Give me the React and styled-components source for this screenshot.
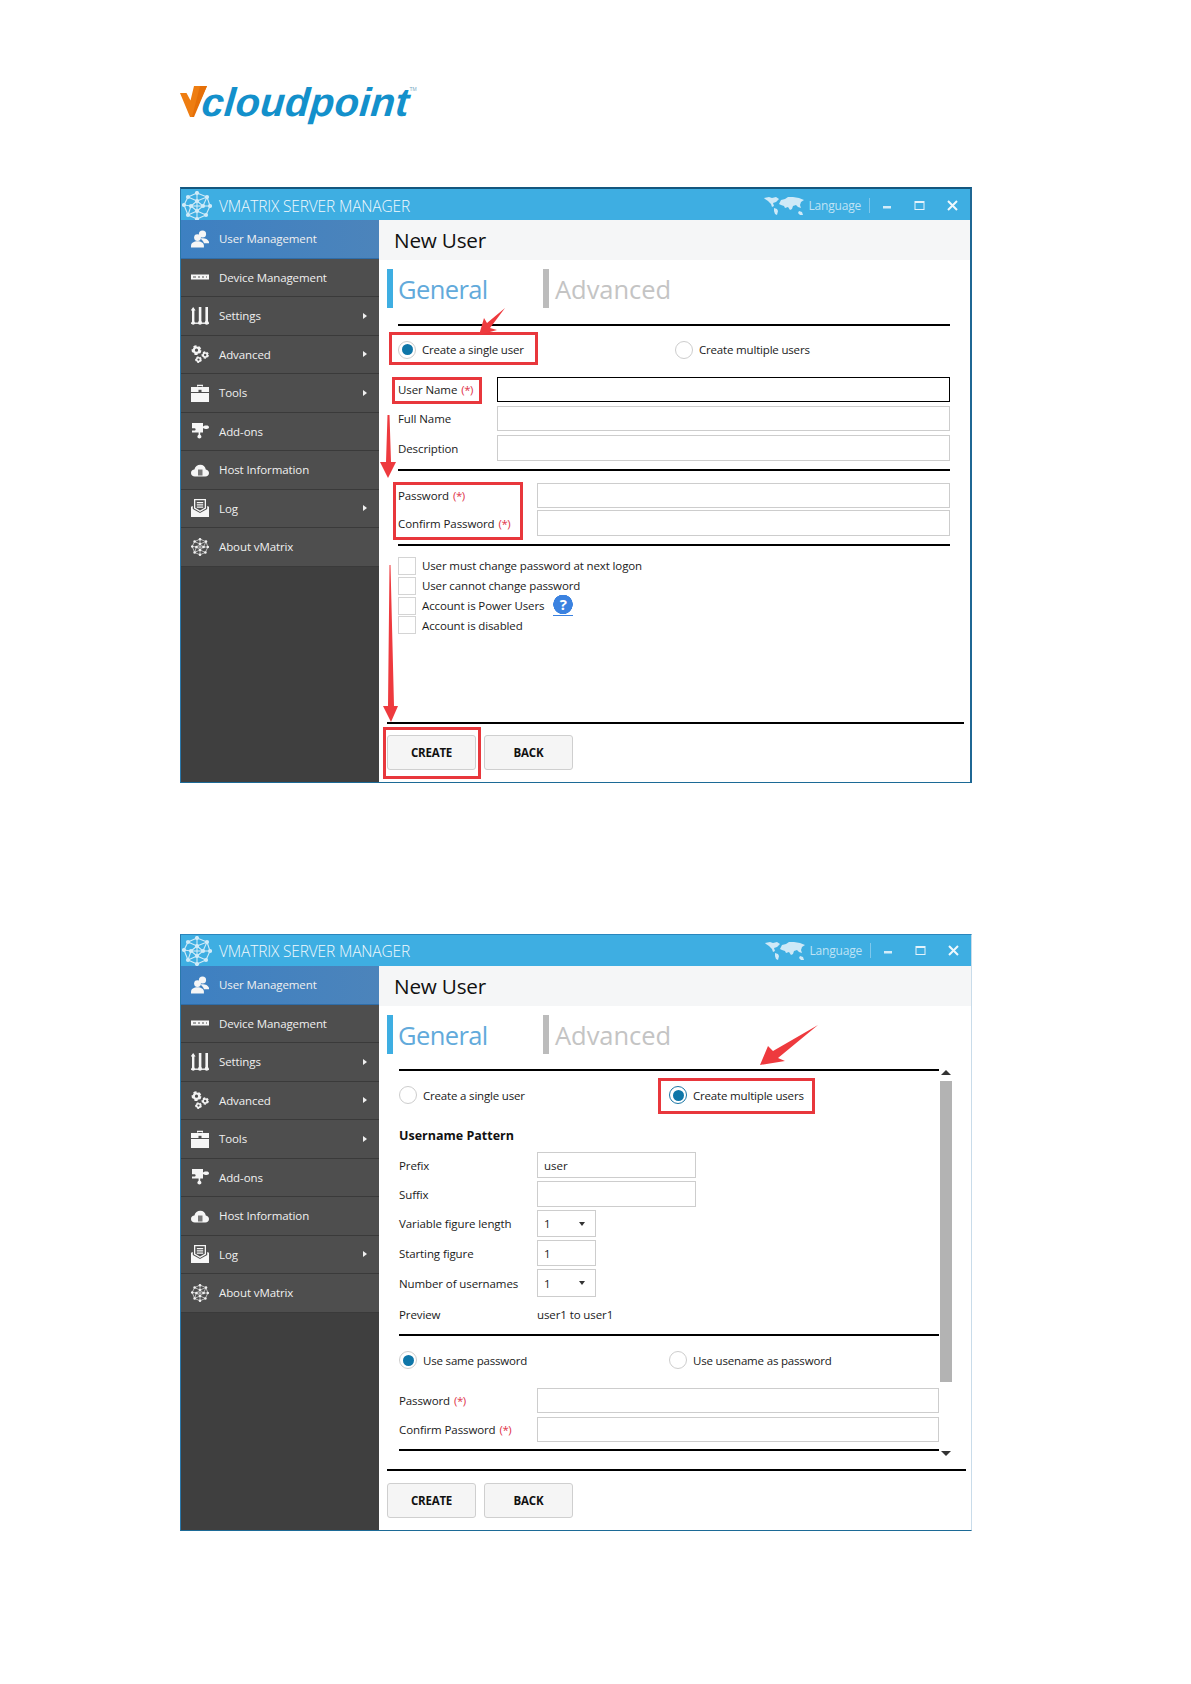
import React from "react";
import styled, { createGlobalStyle } from "styled-components";

const GlobalStyle = createGlobalStyle`
  html, body {
    margin: 0;
    padding: 0;
    background: #fff;
  }
  * {
    box-sizing: border-box;
  }
`;

const FONT = `"Open Sans", "Noto Sans", "Liberation Sans", sans-serif`;

const Page = styled.div`
  position: relative;
  width: 1191px;
  height: 1684px;
  padding: 80px 0 0 180px;
  background: #fff;
  font-family: ${FONT};
`;

const LogoRow = styled.div`
  display: flex;
  align-items: flex-start;
  height: 107px;
`;

const LogoMark = styled.svg`
  width: 28px;
  height: 34px;
  margin-top: 5px;
  flex: none;
`;

const LogoText = styled.span`
  display: block;
  font-family: "Liberation Sans", Arial, sans-serif;
  font-weight: 700;
  font-style: italic;
  font-size: 40px;
  line-height: 44px;
  letter-spacing: 0.3px;
  color: #1390cb;
  margin-left: -6px;
  transform: skewX(-5deg);
`;

const LogoTm = styled.span`
  font-family: "Liberation Sans", Arial, sans-serif;
  font-size: 5px;
  line-height: 10px;
  color: #7aa9c4;
  margin-top: 4px;
`;

const Window = styled.div`
  display: flex;
  flex-direction: column;
  width: 792px;
  height: ${(p) => (p.$second ? "597px" : "596px")};
  margin-top: ${(p) => (p.$second ? "151px" : "0")};
  border-top: ${(p) => (p.$second ? "1px solid #2a86bd" : "2px solid #14577f")};
  border-bottom: 1px solid #1c6a96;
  border-left: 1px solid #2a78ab;
  border-right: ${(p) => (p.$second ? "1px solid #c9dcea" : "2px solid #1f6794")};
`;

const TitleBar = styled.div`
  display: flex;
  align-items: center;
  flex: none;
  height: 31px;
  background: #3eaee2;
  color: #f1f9fd;
  padding: ${(p) => (p.$second ? "0" : "2px")} 12px 0 0;
`;

const TitleLogo = styled.div`
  display: flex;
  width: 38px;
  padding-left: 1px;
  flex: none;
`;

const TitleText = styled.span`
  font-size: 15.5px;
  font-weight: 300;
  letter-spacing: -0.15px;
`;

const TitleActions = styled.div`
  display: flex;
  align-items: center;
  margin-left: auto;
`;

const LanguageText = styled.span`
  font-size: 12px;
  color: #bfe3f5;
  margin-left: 5px;
  letter-spacing: -0.2px;
`;

const TitleSeparator = styled.span`
  width: 1px;
  height: 15px;
  margin: 0 12px 0 8px;
  background: #7fc8ec;
`;

const WinButton = styled.svg`
  display: block;
  width: 11px;
  height: 11px;
  margin-left: ${(p) => p.$gap || 0}px;
`;

const Body = styled.div`
  display: flex;
  flex: 1;
  min-height: 0;
`;

const Sidebar = styled.nav`
  display: flex;
  flex-direction: column;
  flex: none;
  width: 198px;
  background: #3f3f3f;
`;

const MenuItem = styled.div`
  display: flex;
  align-items: center;
  height: 38.5px;
  padding: 0 12px 0 10px;
  color: #f0f0f0;
  font-size: 11.5px;
  letter-spacing: -0.1px;
  background: ${(p) => (p.$active ? "linear-gradient(90deg, #3d80c2, #4c84bb)" : "#4e4e4e")};
  border-bottom: 1px solid ${(p) => (p.$active ? "#2f6da8" : "#3a3a3a")};
`;

const MenuIcon = styled.svg`
  flex: none;
  width: 18px;
  height: 18px;
  margin-right: 10px;
`;

const MenuArrow = styled.span`
  margin-left: auto;
  border-left: 4px solid #f0f0f0;
  border-top: 3.5px solid transparent;
  border-bottom: 3.5px solid transparent;
`;

const Main = styled.main`
  display: flex;
  flex-direction: column;
  flex: 1;
  min-width: 0;
  background: #fff;
`;

const PageHeader = styled.header`
  display: flex;
  align-items: center;
  flex: none;
  height: 40px;
  padding: 0 0 0 15px;
  background: #f5f6f7;
  font-size: 20.7px;
  color: #111;
  letter-spacing: -0.2px;
`;

const TabBar = styled.div`
  display: flex;
  flex: none;
  height: 39px;
  margin: 9px 0 0 8px;
`;

const Tab = styled.div`
  display: flex;
  align-items: center;
  width: 156px;
  padding-left: ${(p) => (p.$active ? "5px" : "6px")};
  font-size: 25.5px;
  letter-spacing: ${(p) => (p.$active ? "-0.6px" : "-0.05px")};
  color: ${(p) => (p.$active ? "#62aadb" : "#c4c4c4")};
  border-left: 6px solid ${(p) => (p.$active ? "#3eaee2" : "#bcbcbc")};
`;

const FormArea = styled.div`
  display: flex;
  flex-direction: column;
  flex: none;
  margin: 16px 20px 0 19px;
`;

const Rule = styled.div`
  flex: none;
  height: 2px;
  background: #000;
  margin-top: ${(p) => p.$top || 0}px;
`;

const RadioRow = styled.div`
  display: flex;
  align-items: center;
  flex: none;
  height: ${(p) => p.$height}px;
  margin-bottom: ${(p) => p.$after || 0}px;
`;

const RadioOption = styled.label`
  display: flex;
  align-items: center;
  width: ${(p) => p.$width}px;
  font-size: 11.5px;
  letter-spacing: -0.18px;
  color: #1a1a1a;
`;

const RadioDot = styled.span`
  display: flex;
  align-items: center;
  justify-content: center;
  flex: none;
  width: 18px;
  height: 18px;
  margin-right: 6px;
  border-radius: 50%;
  background: #fff;
  border: 1px solid ${(p) => (p.$strong ? "#1a76a5" : "#cdcdcd")};

  &::after {
    content: "";
    display: ${(p) => (p.$on ? "block" : "none")};
    width: 11px;
    height: 11px;
    border-radius: 50%;
    background: #0e76a8;
  }
`;

const FieldRow = styled.div`
  display: grid;
  grid-template-columns: ${(p) => p.$label}px ${(p) => p.$input || "1fr"};
  align-items: center;
  flex: none;
  height: ${(p) => p.$height || 25}px;
  margin-top: ${(p) => p.$top || 0}px;
  margin-bottom: ${(p) => (p.$gap === undefined ? 4 : p.$gap)}px;
`;

const FieldLabel = styled.span`
  font-size: 11.5px;
  letter-spacing: -0.1px;
  color: #1a1a1a;
`;

const Required = styled.span`
  color: #e0344a;
  margin-left: 4px;
  letter-spacing: -0.5px;
`;

const TextBox = styled.input`
  display: block;
  width: 100%;
  height: 100%;
  padding: 0 6px;
  font-family: ${FONT};
  font-size: 11.5px;
  color: #222;
  background: #fff;
  outline: none;
  border: 1px solid ${(p) => (p.$focused ? "#000" : "#cdcdcd")};
`;

const DropBox = styled.div`
  display: flex;
  align-items: center;
  justify-content: space-between;
  height: 100%;
  padding: 0 10px 0 6px;
  font-size: 11.5px;
  color: #222;
  border: 1px solid #cdcdcd;

  &::after {
    content: "";
    border-top: 4px solid #333;
    border-left: 3.5px solid transparent;
    border-right: 3.5px solid transparent;
  }
`;

const CheckList = styled.div`
  display: flex;
  flex-direction: column;
  gap: 2px;
  margin-top: 11px;
`;

const CheckRow = styled.label`
  display: flex;
  align-items: center;
  height: 17.8px;
  font-size: 11.5px;
  letter-spacing: -0.13px;
  color: #1a1a1a;
`;

const CheckBox = styled.span`
  flex: none;
  width: 18px;
  height: 18px;
  margin-right: 6px;
  border: 1px solid #d4d4d4;
`;

const HelpBadge = styled.span`
  display: flex;
  align-items: center;
  justify-content: center;
  flex: none;
  width: 20px;
  height: 21px;
  margin: -1px 0 0 9px;
  color: #fff;
  font-size: 15px;
  font-weight: 700;
  line-height: 1;
  background: radial-gradient(circle at 50% 47%, #3b82e0 0 9.5px, transparent 10px);
  border-bottom: 1px solid #3b82e0;
`;

const Footer = styled.footer`
  display: flex;
  flex-direction: column;
  flex: none;
  margin: auto ${(p) => (p.$second ? "5px" : "6px")} 0 8px;
`;

const ButtonRow = styled.div`
  display: flex;
  gap: 8px;
  margin: ${(p) => (p.$second ? "12px" : "11px")} 0 12px;
`;

const ActionButton = styled.button`
  width: 89px;
  height: 35px;
  padding: 0;
  font-family: ${FONT};
  font-size: 11.5px;
  font-weight: 700;
  letter-spacing: -0.2px;
  color: #111;
  background: #f5f5f5;
  border: 1px solid #cfcfcf;
  border-radius: 3px;
`;

const ScrollArea = styled.div`
  display: flex;
  flex: none;
  margin: 15px 19px 0 20px;
`;

const ScrollContent = styled.div`
  display: flex;
  flex-direction: column;
  width: 540px;
`;

const Scrollbar = styled.div`
  display: flex;
  flex-direction: column;
  align-items: center;
  width: 12px;
  margin-left: 1px;
`;

const ScrollThumb = styled.div`
  width: 12px;
  height: 301px;
  margin-top: 6px;
  background: #b3b3b3;
`;

const ScrollUp = styled.span`
  margin-top: 1px;
  border-bottom: 5px solid #333;
  border-left: 5px solid transparent;
  border-right: 5px solid transparent;
`;

const ScrollDown = styled.span`
  margin-top: auto;
  margin-bottom: -5px;
  border-top: 5px solid #333;
  border-left: 5px solid transparent;
  border-right: 5px solid transparent;
`;

const SectionTitle = styled.div`
  display: flex;
  align-items: center;
  height: 28px;
  margin: 2px 0 3px;
  font-size: 12.5px;
  font-weight: 700;
  color: #111;
`;

const RedBox = styled.div`
  position: absolute;
  left: ${(p) => p.$x}px;
  top: ${(p) => p.$y}px;
  width: ${(p) => p.$w}px;
  height: ${(p) => p.$h}px;
  border: 3px solid #e8373c;
  pointer-events: none;
`;

const ArrowLayer = styled.svg`
  position: absolute;
  left: 0;
  top: 0;
  width: 1191px;
  height: 1684px;
  pointer-events: none;
`;

const MENU = [
  { key: "users", label: "User Management" },
  { key: "device", label: "Device Management" },
  { key: "settings", label: "Settings", arrow: true },
  { key: "gears", label: "Advanced", arrow: true },
  { key: "tools", label: "Tools", arrow: true },
  { key: "addons", label: "Add-ons" },
  { key: "host", label: "Host Information" },
  { key: "log", label: "Log", arrow: true },
  { key: "about", label: "About vMatrix" },
];

const NET_NODES = [
  [15, 2], [25, 6], [28, 15], [24, 24], [15, 28], [6, 24], [2, 14], [6, 6],
  [15, 10], [21, 15], [15, 20], [9, 15],
];
const NET_LINES = [
  [0, 1], [1, 2], [2, 3], [3, 4], [4, 5], [5, 6], [6, 7], [7, 0],
  [0, 8], [1, 9], [2, 9], [3, 10], [4, 10], [5, 11], [6, 11], [7, 8],
  [8, 9], [9, 10], [10, 11], [11, 8], [8, 10], [9, 11], [1, 8], [5, 10],
];

function NetGlyph({ color, opacity }) {
  return (
    <g stroke={color} fill={color} opacity={opacity}>
      {NET_LINES.map(([a, b], i) => (
        <line key={i} x1={NET_NODES[a][0]} y1={NET_NODES[a][1]} x2={NET_NODES[b][0]} y2={NET_NODES[b][1]} strokeWidth="1.1" />
      ))}
      {NET_NODES.map(([x, y], i) => (
        <circle key={i} cx={x} cy={y} r="2.1" stroke="none" />
      ))}
    </g>
  );
}

function Gear({ x, y, r }) {
  return (
    <g fill="none" stroke="#f4f4f4">
      <circle cx={x} cy={y} r={r * 0.75} strokeWidth={r * 0.6} />
      <circle cx={x} cy={y} r={r * 1.1} strokeWidth={r * 0.5} strokeDasharray={`${r * 0.85} ${r * 0.55}`} />
    </g>
  );
}

function MenuGlyph({ name }) {
  const white = "#f6f6f6";
  switch (name) {
    case "users":
      return (
        <MenuIcon viewBox="0 0 18 18" fill={white}>
          <circle cx="11.5" cy="4" r="3.6" />
          <path d="M9 8.6c3-1 7.6-.5 9 3.2v1.4h-5c-.6-2-2.2-3.6-4-4.6z" />
          <circle cx="6.5" cy="7.6" r="3.4" />
          <path d="M0 17.5v-1.7c0-3 3-4.5 6.5-4.5s6.4 1.500 6.4 4.500v1.700z" />
        </MenuIcon>
      );
    case "device":
      return (
        <MenuIcon viewBox="0 0 18 18">
          <rect x="0" y="6.500" width="18" height="5" fill={white} />
          <path d="M2 9h3M7 9h2M11 9h2M15 9h1" stroke="#4e4e4e" strokeWidth="1.200" />
        </MenuIcon>
      );
    case "settings":
      return (
        <MenuIcon viewBox="0 0 18 18" fill={white}>
          <path d="M2.200 0l2.400 3.400h-4.800z" />
          <rect x="1" y="3" width="2.400" height="14" />
          <rect x="7.800" y="0" width="2.600" height="15" />
          <rect x="14.400" y="0" width="2.600" height="15" />
          <rect x="0" y="15.500" width="18" height="1.400" />
          <circle cx="2.200" cy="16" r="1.700" />
          <circle cx="9" cy="15.800" r="2" />
          <circle cx="15.700" cy="15.800" r="2" />
        </MenuIcon>
      );
    case "gears":
      return (
        <MenuIcon viewBox="0 0 18 18">
          <Gear x={5.500} y={5.200} r={3.600} />
          <Gear x={14.200} y={10} r={2.700} />
          <Gear x={7.500} y={14.600} r={2.500} />
        </MenuIcon>
      );
    case "tools":
      return (
        <MenuIcon viewBox="0 0 18 18" fill={white}>
          <path d="M6 2.500V.8h6v1.700h-1.200v-.6H7.200v.6z" />
          <path d="M0 3h18v5H0z" />
          <path d="M0 9h18v9H0z" />
          <rect x="7.500" y="5.800" width="3" height="2.600" fill="#4e4e4e" />
        </MenuIcon>
      );
    case "addons":
      return (
        <MenuIcon viewBox="0 0 18 18" fill={white}>
          <path d="M1 1h11v3.400c1.200-.9 2.400-.9 3.600-.9 1.400 0 2.400.6 2.400 1.700s-1 1.700-2.400 1.700c-1.200 0-2.400 0-3.600-.9v4.500H9.200v2.200c1 .6 1.200 1.400 1.200 2.100 0 1.200-1 1.700-2 1.700s-2-.5-2-1.700c0-.7.200-1.500 1.200-2.100v-2.200H1V8.600h2.200c.9 0 1.400-.5 1.400-1.200s-.5-1.200-1.400-1.200H1z" />
        </MenuIcon>
      );
    case "host":
      return (
        <MenuIcon viewBox="0 0 18 18" fill={white}>
          <path d="M4 15.500C1.600 15.500 0 14 0 12s1.500-3.300 3.400-3.400C4 5.800 6.500 3.800 9.300 3.800c2.900 0 5 1.900 5.500 4.600 1.900.2 3.200 1.700 3.200 3.600 0 2-1.500 3.500-3.700 3.500z" />
          <rect x="7" y="8.500" width="4.500" height="6" fill="#7a7a7a" />
        </MenuIcon>
      );
    case "log":
      return (
        <MenuIcon viewBox="0 0 18 18" fill={white}>
          <path d="M3 0h12v9.500L9 13 3 9.500zM4.300 1.200v7.600L9 11.600l4.700-2.800V1.200z" />
          <path d="M5.800 3h6.400v1.200H5.800zM5.800 5.300h6.400v1.200H5.800zM5.800 7.500h6.400v1.200H5.800z" />
          <path d="M0 7.800l1.800-.9v3L9 14l7.200-4.100v-3l1.800.9V18H0z" />
        </MenuIcon>
      );
    default:
      return (
        <MenuIcon viewBox="0 0 30 30">
          <NetGlyph color="#f0f0f0" />
        </MenuIcon>
      );
  }
}

function WorldMap() {
  return (
    <svg width="40" height="20" viewBox="0 0 40 20" fill="#cfe9f7">
      <path d="M0 2l5-1 3 1 4-1 3 2-3 3-3 1 1 3-2 1-1-3-3-3-3-2z" />
      <path d="M10 12l3 1 1 2-1 4-2-1-1-3z" />
      <path d="M15 8l2-4 4-1 3-2 5 0 6 1 5 2-3 2-1 3 1 3-3-1-2-2-3 1-1 3-2 1-2-3-3 1-1-2-3-1z" />
      <path d="M35 15l3 1 1 3-3 0-2-2z" />
    </svg>
  );
}

function Shell({ second, children }) {
  return (
    <Window $second={second}>
      <TitleBar $second={second}>
        <TitleLogo>
          <svg width="30" height="30" viewBox="0 0 30 30">
            <NetGlyph color="#eaf6fc" opacity="0.85" />
          </svg>
        </TitleLogo>
        <TitleText>VMATRIX SERVER MANAGER</TitleText>
        <TitleActions>
          <WorldMap />
          <LanguageText>Language</LanguageText>
          <TitleSeparator />
          <WinButton viewBox="0 0 11 11">
            <rect x="1" y="6" width="8" height="2.500" fill="#d3ecf9" />
          </WinButton>
          <WinButton viewBox="0 0 11 11" $gap={21}>
            <rect x="1" y="1.500" width="9" height="8" fill="none" stroke="#e4f3fb" strokeWidth="1" />
            <rect x="1" y="1" width="9" height="2" fill="#e4f3fb" />
          </WinButton>
          <WinButton viewBox="0 0 11 11" $gap={22}>
            <path d="M1 1l9 9M10 1l-9 9" stroke="#eef8fd" strokeWidth="2" />
          </WinButton>
        </TitleActions>
      </TitleBar>
      <Body>
        <Sidebar>
          {MENU.map((item, i) => (
            <MenuItem key={item.key} $active={i === 0}>
              <MenuGlyph name={item.key} />
              {item.label}
              {item.arrow && <MenuArrow />}
            </MenuItem>
          ))}
        </Sidebar>
        <Main>
          <PageHeader>New User</PageHeader>
          <TabBar>
            <Tab $active>General</Tab>
            <Tab>Advanced</Tab>
          </TabBar>
          {children}
          <Footer $second={second}>
            <Rule />
            <ButtonRow $second={second}>
              <ActionButton>CREATE</ActionButton>
              <ActionButton>BACK</ActionButton>
            </ButtonRow>
          </Footer>
        </Main>
      </Body>
    </Window>
  );
}

function SingleUserForm() {
  return (
    <FormArea>
      <Rule />
      <RadioRow $height={47} $after={4}>
        <RadioOption $width={277}>
          <RadioDot $on />
          Create a single user
        </RadioOption>
        <RadioOption>
          <RadioDot />
          Create multiple users
        </RadioOption>
      </RadioRow>
      <FieldRow $label={99}>
        <FieldLabel>
          User Name<Required>(*)</Required>
        </FieldLabel>
        <TextBox $focused readOnly />
      </FieldRow>
      <FieldRow $label={99}>
        <FieldLabel>Full Name</FieldLabel>
        <TextBox readOnly />
      </FieldRow>
      <FieldRow $label={99} $gap={0} $height={26}>
        <FieldLabel>Description</FieldLabel>
        <TextBox readOnly />
      </FieldRow>
      <Rule $top={8} />
      <FieldRow $label={139} $gap={2} $top={12}>
        <FieldLabel>
          Password<Required>(*)</Required>
        </FieldLabel>
        <TextBox readOnly />
      </FieldRow>
      <FieldRow $label={139} $gap={0} $height={26}>
        <FieldLabel>
          Confirm Password<Required>(*)</Required>
        </FieldLabel>
        <TextBox readOnly />
      </FieldRow>
      <Rule $top={8} />
      <CheckList>
        <CheckRow>
          <CheckBox />
          User must change password at next logon
        </CheckRow>
        <CheckRow>
          <CheckBox />
          User cannot change password
        </CheckRow>
        <CheckRow>
          <CheckBox />
          Account is Power Users
          <HelpBadge>?</HelpBadge>
        </CheckRow>
        <CheckRow>
          <CheckBox />
          Account is disabled
        </CheckRow>
      </CheckList>
    </FormArea>
  );
}

function MultipleUsersForm() {
  return (
    <ScrollArea>
      <ScrollContent>
        <Rule />
        <RadioRow $height={48}>
          <RadioOption $width={270}>
            <RadioDot />
            Create a single user
          </RadioOption>
          <RadioOption>
            <RadioDot $on $strong />
            Create multiple users
          </RadioOption>
        </RadioRow>
        <SectionTitle>Username Pattern</SectionTitle>
        <FieldRow $label={138} $input="159px" $height={26} $gap={3}>
          <FieldLabel>Prefix</FieldLabel>
          <TextBox readOnly defaultValue="user" />
        </FieldRow>
        <FieldRow $label={138} $input="159px" $height={26} $gap={3}>
          <FieldLabel>Suffix</FieldLabel>
          <TextBox readOnly />
        </FieldRow>
        <FieldRow $label={138} $input="59px" $height={27} $gap={3}>
          <FieldLabel>Variable figure length</FieldLabel>
          <DropBox>1</DropBox>
        </FieldRow>
        <FieldRow $label={138} $input="59px" $height={26} $gap={3}>
          <FieldLabel>Starting figure</FieldLabel>
          <TextBox readOnly defaultValue="1" />
        </FieldRow>
        <FieldRow $label={138} $input="59px" $height={28} $gap={2}>
          <FieldLabel>Number of usernames</FieldLabel>
          <DropBox>1</DropBox>
        </FieldRow>
        <FieldRow $label={138} $height={30} $gap={0}>
          <FieldLabel>Preview</FieldLabel>
          <FieldLabel>user1 to user1</FieldLabel>
        </FieldRow>
        <Rule $top={5} />
        <RadioRow $height={48} $after={4}>
          <RadioOption $width={270}>
            <RadioDot $on />
            Use same password
          </RadioOption>
          <RadioOption>
            <RadioDot />
            Use usename as password
          </RadioOption>
        </RadioRow>
        <FieldRow $label={138} $gap={4}>
          <FieldLabel>
            Password<Required>(*)</Required>
          </FieldLabel>
          <TextBox readOnly />
        </FieldRow>
        <FieldRow $label={138} $gap={0}>
          <FieldLabel>
            Confirm Password<Required>(*)</Required>
          </FieldLabel>
          <TextBox readOnly />
        </FieldRow>
        <Rule $top={7} />
      </ScrollContent>
      <Scrollbar>
        <ScrollUp />
        <ScrollThumb />
        <ScrollDown />
      </Scrollbar>
    </ScrollArea>
  );
}

export default function App() {
  return (
    <Page>
      <GlobalStyle />
      <LogoRow>
        <LogoMark viewBox="0 0 28 34">
          <path d="M0 8h6.500l4 7.500L14 1h13L13 32h-3z" fill="#ee7d11" />
          <path d="M20 1h7L14 32h-2z" fill="#e56f08" />
        </LogoMark>
        <LogoText>cloudpoint</LogoText>
        <LogoTm>TM</LogoTm>
      </LogoRow>

      <Shell>
        <SingleUserForm />
      </Shell>

      <Shell second>
        <MultipleUsersForm />
      </Shell>

      <RedBox $x={389} $y={332} $w={149} $h={33} />
      <RedBox $x={392} $y={377} $w={90} $h={27} />
      <RedBox $x={393} $y={482} $w={130} $h={58} />
      <RedBox $x={383} $y={727} $w={98} $h={52} />
      <RedBox $x={658} $y={1078} $w={157} $h={36} />

      <ArrowLayer viewBox="0 0 1191 1684">
        <g fill="#ee3a3e">
          <polygon points="505,308 490,328 497,330 479,335 484,318 487,323" />
          <polygon points="387.500,415 389.500,415 391,462 396,462 388,478 380,462 386,462" />
          <polygon points="389.500,565 390.500,565 394,706 398,706 391,722 383,706 388,706" />
          <polygon points="818,1025 778,1058 785,1061 760,1065 768,1046 773,1051" />
        </g>
      </ArrowLayer>
    </Page>
  );
}
